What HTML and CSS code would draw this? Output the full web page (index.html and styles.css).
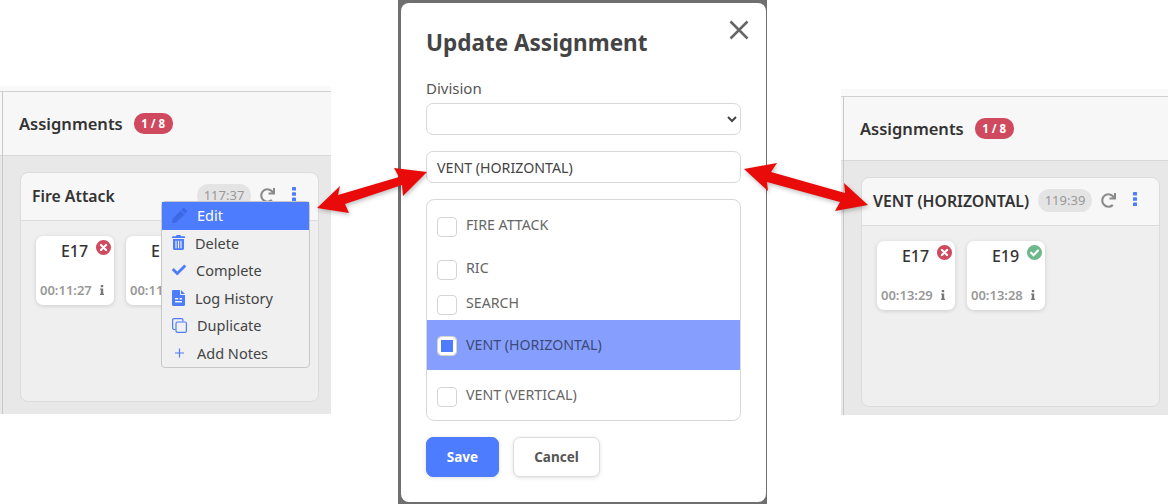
FILE: index.html
```html
<!DOCTYPE html>
<html lang="en">
<head>
    <meta charset="UTF-8">
    <title>Update Assignment</title>
    <link rel="stylesheet" href="styles.css">
</head>
<body>
    <!-- Panel before the edit -->
    <section class="panel panel-before">
        <div class="panel-inner">
            <header class="panel-head">
                <h2>Assignments</h2>
                <span class="count">1 / 8</span>
            </header>
            <div class="panel-body">
                <div class="card">
                    <div class="card-head">
                        <h3>Fire Attack</h3>
                        <span class="timer">117:37</span>
                        <svg class="refresh" viewBox="0 0 512 512"><path d="M500.33 0h-47.41a12 12 0 0 0-12 12.57l4 82.76A247.42 247.42 0 0 0 256 8C119.34 8 8.9 119.53 8 256.19 7.1 393.07 118.1 504 256 504a247.1 247.1 0 0 0 166.18-63.91 12 12 0 0 0 .48-17.43l-34-34a12 12 0 0 0-16.38-.55A176 176 0 1 1 402.1 157.8l-101.53-4.87a12 12 0 0 0-12.57 12v47.41a12 12 0 0 0 12 12h200.33a12 12 0 0 0 12-12V12a12 12 0 0 0-12-12z"/></svg>
                        <svg class="kebab" viewBox="0 0 4 14"><rect width="4" height="3.6" rx=".6"/><rect y="5.2" width="4" height="3.6" rx=".6"/><rect y="10.4" width="4" height="3.6" rx=".6"/></svg>
                    </div>
                    <div class="tiles">
                        <div class="tile">
                            <span class="tile-name">E17</span>
                            <span class="status status-off"><svg viewBox="0 0 14 14"><path d="M4.6 4.6l4.8 4.8M9.4 4.6l-4.8 4.8"/></svg></span>
                            <div class="tile-foot">
                                <span>00:11:27</span>
                                <svg class="info" viewBox="0 0 4 10"><rect x=".8" width="2.4" height="2.2"/><path d="M0 3.4h3.2v5.4H4V10H0V8.8h.8V4.6H0z"/></svg>
                            </div>
                        </div>
                        <div class="tile">
                            <span class="tile-name">E19</span>
                            <div class="tile-foot">
                                <span>00:11:27</span>
                            </div>
                        </div>
                    </div>
                    <!-- Menu du kebab -->
                    <ul class="menu">
                        <li class="menu-active">
                            <svg width="15" height="15" viewBox="0 0 512 512"><path d="M497.9 142.1l-46.1 46.1c-4.7 4.7-12.3 4.7-17 0l-111-111c-4.7-4.7-4.7-12.3 0-17l46.1-46.1c18.7-18.7 49.1-18.7 67.9 0l60.1 60.1c18.8 18.7 18.8 49.1 0 67.9zM284.2 99.8L21.6 362.4.4 483.9c-2.9 16.4 11.4 30.6 27.8 27.8l121.5-21.3 262.6-262.6c4.7-4.7 4.7-12.3 0-17l-111-111c-4.8-4.7-12.4-4.7-17.1 0z"/></svg>
                            Edit
                        </li>
                        <li>
                            <svg width="13" height="15" viewBox="0 0 13 15"><path d="M4.5 0h4l.6 1.2H12c.6 0 1 .4 1 1v.8H0v-.8c0-.6.4-1 1-1h2.900zM1 4h11v9.500c0 .8-.7 1.500-1.500 1.500h-8C1.700 15 1 14.300 1 13.500zm2.400 1.800v7.400h1.200V5.800zm2.500 0v7.400h1.200V5.800zm2.500 0v7.400h1.200V5.800z" fill-rule="evenodd"/></svg>
                            Delete
                        </li>
                        <li>
                            <svg width="14" height="14" viewBox="0 0 512 512"><path d="M173.898 439.404l-166.4-166.4c-9.997-9.997-9.997-26.206 0-36.204l36.203-36.204c9.997-9.998 26.207-9.998 36.204 0L192 312.69 432.095 72.596c9.997-9.997 26.207-9.997 36.204 0l36.203 36.204c9.997 9.997 9.997 26.206 0 36.204l-294.4 294.401c-9.998 9.997-26.207 9.997-36.204-.001z"/></svg>
                            Complete
                        </li>
                        <li>
                            <svg width="13" height="16" viewBox="0 0 13 16"><path d="M1.200 0H8v4c0 .5.400 1 1 1h4v9.800c0 .7-.500 1.200-1.200 1.200H1.200C.5 16 0 15.500 0 14.800V1.200C0 .5.500 0 1.200 0zM9 0l4 4H9zM3 8v1.400h3.200V8zm4.600 0v1.400H10V8zM3 11v1.400h7V11z" fill-rule="evenodd"/></svg>
                            Log History
                        </li>
                        <li>
                            <svg class="outline" width="15" height="15" viewBox="0 0 15 15"><path d="M3.500 11.500H2c-.8 0-1.400-.6-1.400-1.400V2C.6 1.200 1.200.6 2 .6h7.500c.8 0 1.400.6 1.400 1.400v1.500"/><rect x="4" y="4" width="10.400" height="10.400" rx="1.400"/></svg>
                            Duplicate
                        </li>
                        <li>
                            <svg class="outline plus" width="15" height="15" viewBox="0 0 15 15"><path d="M7.500 3.500v9M3 8h9"/></svg>
                            Add Notes
                        </li>
                    </ul>
                </div>
            </div>
        </div>
    </section>

    <!-- Modal -->
    <div class="modal-frame">
        <div class="modal">
            <svg class="close" viewBox="0 0 20 20"><path d="M1.500 1.500l17 17M18.500 1.500l-17 17"/></svg>
            <h1>Update Assignment</h1>
            <label for="division">Division</label>
            <select id="division"><option></option></select>
            <input class="name-input" type="text" value="VENT (HORIZONTAL)">
            <div class="choices">
                <label class="choice choice-fire"><input type="checkbox">FIRE ATTACK</label>
                <label class="choice choice-ric"><input type="checkbox">RIC</label>
                <label class="choice choice-search"><input type="checkbox">SEARCH</label>
                <label class="choice choice-selected"><input type="checkbox" checked>VENT (HORIZONTAL)</label>
                <label class="choice choice-vert"><input type="checkbox">VENT (VERTICAL)</label>
            </div>
            <div class="modal-actions">
                <button class="btn-save" type="button">Save</button>
                <button class="btn-cancel" type="button">Cancel</button>
            </div>
        </div>
    </div>

    <!-- Panel after the edit -->
    <section class="panel panel-after">
        <div class="panel-inner">
            <header class="panel-head">
                <h2>Assignments</h2>
                <span class="count">1 / 8</span>
            </header>
            <div class="panel-body">
                <div class="card">
                    <div class="card-head">
                        <h3>VENT (HORIZONTAL)</h3>
                        <span class="timer">119:39</span>
                        <svg class="refresh" viewBox="0 0 512 512"><path d="M500.33 0h-47.41a12 12 0 0 0-12 12.57l4 82.76A247.42 247.42 0 0 0 256 8C119.34 8 8.9 119.53 8 256.19 7.1 393.07 118.1 504 256 504a247.1 247.1 0 0 0 166.18-63.91 12 12 0 0 0 .48-17.43l-34-34a12 12 0 0 0-16.38-.55A176 176 0 1 1 402.1 157.8l-101.53-4.87a12 12 0 0 0-12.57 12v47.41a12 12 0 0 0 12 12h200.33a12 12 0 0 0 12-12V12a12 12 0 0 0-12-12z"/></svg>
                        <svg class="kebab" viewBox="0 0 4 14"><rect width="4" height="3.6" rx=".6"/><rect y="5.2" width="4" height="3.6" rx=".6"/><rect y="10.4" width="4" height="3.6" rx=".6"/></svg>
                    </div>
                    <div class="tiles">
                        <div class="tile">
                            <span class="tile-name">E17</span>
                            <span class="status status-off"><svg viewBox="0 0 14 14"><path d="M4.6 4.6l4.8 4.8M9.4 4.6l-4.8 4.8"/></svg></span>
                            <div class="tile-foot">
                                <span>00:13:29</span>
                                <svg class="info" viewBox="0 0 4 10"><rect x=".8" width="2.4" height="2.2"/><path d="M0 3.4h3.2v5.400H4V10H0V8.800h.8V4.600H0z"/></svg>
                            </div>
                        </div>
                        <div class="tile">
                            <span class="tile-name">E19</span>
                            <span class="status status-on"><svg viewBox="0 0 14 14"><path d="M3.800 7.200l2.300 2.300 4.200-4.400"/></svg></span>
                            <div class="tile-foot">
                                <span>00:13:28</span>
                                <svg class="info" viewBox="0 0 4 10"><rect x=".8" width="2.4" height="2.2"/><path d="M0 3.4h3.2v5.400H4V10H0V8.800h.8V4.600H0z"/></svg>
                            </div>
                        </div>
                    </div>
                </div>
            </div>
        </div>
    </section>

    <!-- Red arrows over everything -->
    <svg class="arrows" viewBox="0 0 1173 504">
        <polygon points="317,208 340,186 338,195 399,177 394,168 427,172 403,196 402,185 345,204 349,213"/>
        <polygon points="744,169 777,163 771,172 845,193 844,183 868,205 835,211 840,202 767,182 768,191"/>
    </svg>
</body>
</html>
```

FILE: styles.css
```css
/* Global */
body {
    margin: 0;
    height: 504px;
    overflow: hidden;
    position: relative;
    background-color: #fff;
    font-family: 'Noto Sans', sans-serif;
    color: #333;
}

h1, h2, h3 {
    margin: 0;
}

/* Panels (two screenshots pasted on the canvas) */
.panel {
    position: absolute;
    display: flex;
    box-sizing: border-box;
    background-color: #f9f9f9;
}

.panel-before {
    left: 0;
    top: 86px;
    width: 331px;
    height: 328px;
    padding-top: 5px;
}

.panel-after {
    left: 841px;
    top: 89px;
    width: 327px;
    height: 326px;
    padding-top: 7px;
}

.panel-inner {
    position: relative;
    flex: 1;
    display: flex;
    flex-direction: column;
    border-top: 1px solid #d0d0d0;
}

/* Vertical rule of the app's sidebar */
.panel-inner::before {
    content: '';
    position: absolute;
    left: 2px;
    top: 0;
    bottom: 0;
    width: 1px;
    background-color: #c8c8c8;
}

.panel-head {
    height: 63px;
    flex-shrink: 0;
    display: flex;
    align-items: center;
    gap: 11px;
    padding-left: 19px;
    background-color: #f7f7f7;
    border-bottom: 1px solid #d8d8d8;
}

.panel-head h2 {
    font-size: 16.500px;
    font-weight: 600;
}

.count {
    padding: 2px 7.500px;
    border-radius: 10px;
    background-color: #cf4a5f;
    color: #fff;
    font-size: 11.500px;
    font-weight: 700;
    line-height: 17px;
}

.panel-body {
    flex: 1;
    padding: 16px 0 0 20px;
    background-color: #e8e8e8;
}

/* Card */
.card {
    position: relative;
    box-sizing: border-box;
    width: 299px;
    height: 230px;
    border: 1px solid #dcdcdc;
    border-radius: 8px;
    background-color: #efefef;
}

.card-head {
    height: 48px;
    display: flex;
    align-items: center;
    padding: 0 22px 2px 11px;
    box-sizing: border-box;
    border-bottom: 1px solid #dcdcdc;
    border-radius: 8px 8px 0 0;
    background-color: #f7f7f7;
}

.card-head h3 {
    font-size: 15.800px;
    font-weight: 600;
    margin-right: auto;
    white-space: nowrap;
}

.timer {
    width: 54px;
    line-height: 23px;
    border-radius: 12px;
    background-color: #e4e4e4;
    color: #999;
    font-size: 13px;
    text-align: center;
}

.refresh {
    width: 15px;
    height: 15px;
    margin-left: 9px;
    fill: #8a8a8a;
}

.kebab {
    width: 4px;
    height: 14px;
    margin-left: 17px;
    margin-bottom: 3px;
    fill: #4d7cfe;
}

/* Tiles */
.tiles {
    display: flex;
    gap: 12px;
    padding: 15px 0 0 15px;
}

.tile {
    position: relative;
    box-sizing: border-box;
    width: 78px;
    height: 69px;
    padding: 4px 5px 6px 4px;
    display: flex;
    flex-direction: column;
    justify-content: space-between;
    border-radius: 7px;
    background-color: #fff;
    box-shadow: 0 1px 4px rgba(0, 0, 0, 0.15);
}

.tile-name {
    font-size: 16px;
    font-weight: 500;
    line-height: 22px;
    text-align: center;
}

.tile-foot {
    display: flex;
    align-items: center;
    justify-content: space-between;
    padding-right: 5px;
    color: #999;
    font-size: 13px;
    font-weight: 600;
}

.info {
    width: 4px;
    height: 10px;
    fill: #777;
}

.status {
    position: absolute;
    top: 2px;
    right: 1px;
    width: 15px;
    height: 15px;
    border: 2px solid #fff;
    border-radius: 50%;
}

.status svg {
    display: block;
    width: 15px;
    height: 15px;
    fill: none;
    stroke: #fff;
    stroke-width: 2;
    stroke-linecap: round;
}

.status-off {
    background-color: #cf4a5f;
}

.status-on {
    background-color: #6db98c;
}

/* Menu */
.menu {
    position: absolute;
    left: 140px;
    top: 28px;
    width: 147px;
    margin: 0;
    padding: 0;
    list-style: none;
    border: 1px solid #c8c8c8;
    border-radius: 4px;
    background-color: #f0f0f0;
    font-size: 14.500px;
    color: #444;
}

.menu li {
    height: 27.500px;
    display: flex;
    align-items: center;
    gap: 10px;
    padding: 0 0 1px 10px;
    box-sizing: border-box;
}

.menu svg {
    fill: #4d7cfe;
    flex-shrink: 0;
}

.menu .outline {
    fill: none;
    stroke: #4d7cfe;
    stroke-width: 1.200;
}

.menu-active {
    background-color: #4d7cfe;
    color: #fff;
}

.menu-active svg {
    fill: #3c68e6;
}

/* Modal */
.modal-frame {
    position: absolute;
    left: 398px;
    top: 0;
    width: 369px;
    height: 504px;
    box-sizing: border-box;
    padding: 3px 1px 2px 3px;
    background-color: #6f6f6f;
}

.modal {
    position: relative;
    height: 100%;
    box-sizing: border-box;
    padding: 24px 25px 0;
    border-radius: 8px;
    background-color: #fff;
    display: flex;
    flex-direction: column;
    font-size: 14px;
    color: #555;
}

.modal h1 {
    font-size: 22.500px;
    font-weight: 700;
    line-height: 32px;
    color: #444;
}

.modal > label {
    margin-top: 19px;
    font-size: 15px;
    line-height: 20px;
}

.close {
    position: absolute;
    top: 17px;
    right: 17px;
    width: 20px;
    height: 20px;
    fill: none;
    stroke: #666;
    stroke-width: 2.500;
}

#division, .name-input {
    box-sizing: border-box;
    width: 315px;
    height: 32px;
    border: 1px solid #d8d8d8;
    border-radius: 7px;
    background-color: #fff;
    font-family: inherit;
    font-size: 14.200px;
    color: #444;
}

#division {
    margin-top: 5px;
}

.name-input {
    margin-top: 16px;
    padding: 0 10px;
}

/* Checkbox list */
.choices {
    box-sizing: border-box;
    width: 315px;
    height: 222px;
    margin-top: 16px;
    border: 1px solid #d8d8d8;
    border-radius: 8px;
    overflow: hidden;
    display: flex;
    flex-direction: column;
}

.choice {
    display: flex;
    align-items: flex-start;
    gap: 9px;
    padding-left: 10px;
    box-sizing: border-box;
    font-size: 14.200px;
    line-height: 20px;
    color: #666;
}

.choice input {
    appearance: none;
    width: 20px;
    height: 20px;
    margin: 2px 0 0;
    flex-shrink: 0;
    border: 1px solid #d4d4d4;
    border-radius: 4px;
    background-color: #fff;
}

.choice-fire {
    height: 52px;
    padding-top: 15px;
}

.choice-ric {
    height: 35px;
    padding-top: 6px;
}

.choice-search {
    height: 33px;
    padding-top: 6px;
}

.choice-selected {
    height: 50px;
    padding-top: 15px;
    background-color: #869ffe;
    color: #3b4a78;
}

.choice-selected input {
    margin-top: 1px;
    background-color: #4d7cfe;
    box-shadow: inset 0 0 0 3px #fff;
}

.choice-vert {
    height: 50px;
    padding-top: 15px;
}

/* Buttons */
.modal-actions {
    display: flex;
    gap: 14px;
    margin-top: 16px;
}

.modal-actions button {
    height: 40px;
    border-radius: 7px;
    font-family: inherit;
    font-size: 13.500px;
    font-weight: 700;
    box-shadow: 0 1px 4px rgba(0, 0, 0, 0.12);
}

.btn-save {
    width: 73px;
    border: 1px solid #4d7cfe;
    background-color: #4d7cfe;
    color: #fff;
}

.btn-cancel {
    width: 87px;
    border: 1px solid #ddd;
    background-color: #fff;
    color: #555;
}

/* Arrows */
.arrows {
    position: absolute;
    left: 0;
    top: 0;
    width: 1173px;
    height: 504px;
    fill: #e90a0a;
    filter: drop-shadow(1px 2px 2px rgba(0, 0, 0, 0.25));
    pointer-events: none;
}
```
